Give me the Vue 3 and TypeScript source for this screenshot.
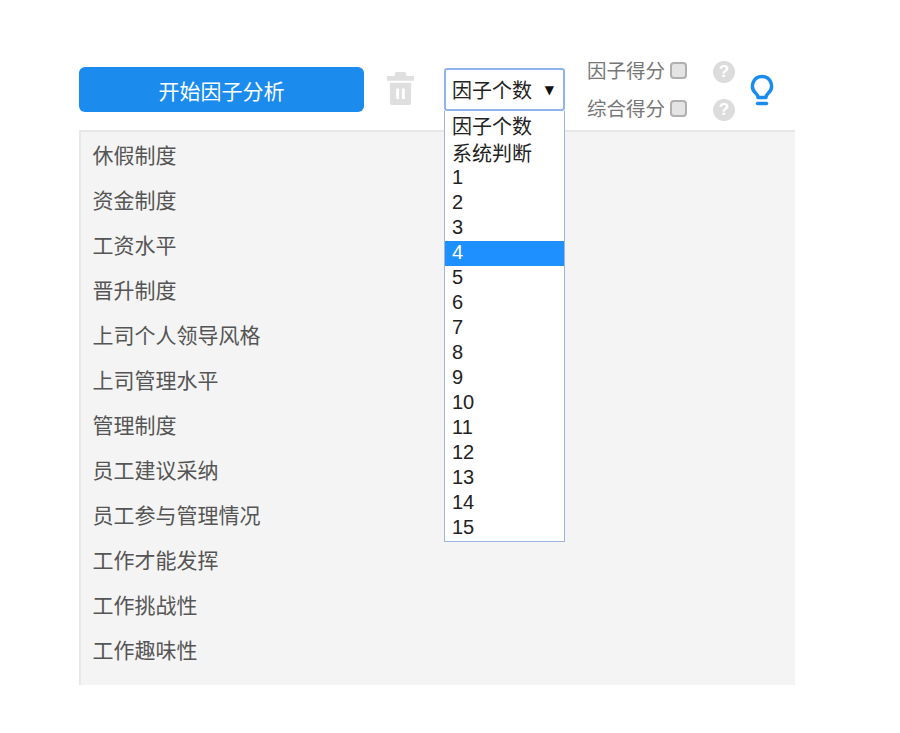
<script setup lang="ts">
const factors = [
  "休假制度",
  "资金制度",
  "工资水平",
  "晋升制度",
  "上司个人领导风格",
  "上司管理水平",
  "管理制度",
  "员工建议采纳",
  "员工参与管理情况",
  "工作才能发挥",
  "工作挑战性",
  "工作趣味性",
];

const options = ["因子个数", "系统判断", ...Array.from({ length: 15 }, (_, i) => String(i + 1))];
const selected = "4";
const scores = ["因子得分", "综合得分"];
</script>

<template>
  <div class="page">
    <div class="toolbar">
      <button type="button" class="start">开始因子分析</button>

      <svg class="trash" viewBox="0 0 28 34" aria-hidden="true">
        <path d="M10 0h8a2 2 0 0 1 2 2v2h6.500a1.500 1.500 0 0 1 0 5H1.500a1.500 1.500 0 0 1 0-5H8V2a2 2 0 0 1 2-2z" />
        <path
          fill-rule="evenodd"
          d="M3 11h22v21a2 2 0 0 1-2 2H5a2 2 0 0 1-2-2zM9.500 17v11h3V17zM15.500 17v11h3V17z"
        />
      </svg>

      <div class="select">
        <div class="select__value">
          <span>因子个数</span>
          <span class="select__arrow">▼</span>
        </div>
        <ul class="select__list">
          <li v-for="o in options" :key="o" :class="{ active: o === selected }">{{ o }}</li>
        </ul>
      </div>

      <div class="scores">
        <div v-for="s in scores" :key="s" class="score">
          <label class="score__label">
            {{ s }}
            <input type="checkbox" />
          </label>
          <span class="help">?</span>
        </div>
      </div>

      <svg class="bulb" viewBox="0 0 24 33" aria-hidden="true">
        <path
          d="M12 2.500a9.500 9.500 0 0 0-6.200 16.700c1.300 1.200 2.200 2.500 2.200 4.300h8c0-1.800.9-3.100 2.200-4.300A9.500 9.500 0 0 0 12 2.500z"
          fill="none"
          stroke="currentColor"
          stroke-width="3.400"
          stroke-linejoin="round"
        />
        <path d="M7.500 29.500h9" stroke="currentColor" stroke-width="3.500" stroke-linecap="round" />
      </svg>
    </div>

    <div class="panel">
      <div v-for="f in factors" :key="f" class="row">{{ f }}</div>
    </div>
  </div>
</template>

<style>
html,
body {
  background: #fff;
}
</style>

<style scoped>
.page {
  height: 733px;
  box-sizing: border-box;
  padding: 67px 0 0 79px;
  font-family: "Liberation Sans", "Noto Sans CJK SC", sans-serif;
  overflow: hidden;
}

.toolbar {
  display: flex;
  align-items: flex-start;
  height: 63px;
  width: 716px;
}

.start {
  width: 285px;
  height: 45px;
  border: 0;
  border-radius: 6px;
  background: #1b8cee;
  color: #fff;
  font: inherit;
  font-size: 21px;
  padding: 0;
}

.trash {
  width: 27px;
  height: 33px;
  margin: 5px 0 0 23px;
  fill: #dfdfdf;
  flex: none;
}

.select {
  position: relative;
  width: 121px;
  margin: 1px 0 0 30px;
  flex: none;
  color: #222;
  font-size: 20px;
}

.select__value {
  box-sizing: border-box;
  height: 43px;
  display: flex;
  align-items: center;
  justify-content: space-between;
  padding: 0 9px 0 6px;
  border: 2px solid #8fb3ec;
  border-radius: 3px;
  background: #fff;
}

.select__arrow {
  font-size: 12px;
  color: #111;
  font-family: "DejaVu Sans", sans-serif;
}

.select__list {
  position: absolute;
  left: 0;
  top: 43px;
  width: 100%;
  box-sizing: border-box;
  margin: 0;
  padding: 2px 0 0;
  list-style: none;
  background: #fff;
  border: 1px solid #9db4de;
  border-top: 0;
  z-index: 2;
}

.select__list li {
  height: 25px;
  line-height: 23px;
  padding-left: 7px;
}

.select__list li:first-child {
  height: 28px;
  line-height: 29px;
}

.select__list li:nth-child(2) {
  line-height: 27px;
}

.select__list li.active {
  background: #1e90ff;
  color: #fff;
}

.scores {
  margin: -13px 0 0 22px;
  display: flex;
  flex-direction: column;
  gap: 8px;
  flex: none;
}

.score {
  display: flex;
  align-items: center;
  height: 30px;
}

.score__label {
  display: flex;
  align-items: center;
  gap: 5px;
  width: 126px;
  color: #777;
  font-size: 19.500px;
}

.score__label input {
  appearance: none;
  width: 17px;
  height: 17px;
  margin: 3px 0 0;
  border: 2px solid #b0b0b0;
  border-radius: 4px;
  background: #e4e4e4;
}

.help {
  width: 22px;
  height: 22px;
  margin-top: 6px;
  border-radius: 50%;
  background: #dcdcdc;
  color: #fff;
  font-size: 17px;
  font-weight: 700;
  line-height: 22px;
  text-align: center;
}

.bulb {
  width: 24px;
  height: 33px;
  margin: 7px 0 0 15px;
  color: #1b8cee;
  flex: none;
}

.panel {
  box-sizing: border-box;
  width: 716px;
  height: 555px;
  padding-top: 1px;
  border-top: 2px solid #e8e8e8;
  border-left: 2px solid #e8e8e8;
  background: #f4f4f4;
  overflow: hidden;
}

.row {
  height: 45px;
  line-height: 45px;
  padding-left: 11.500px;
  color: #555;
  font-size: 21px;
}
</style>
